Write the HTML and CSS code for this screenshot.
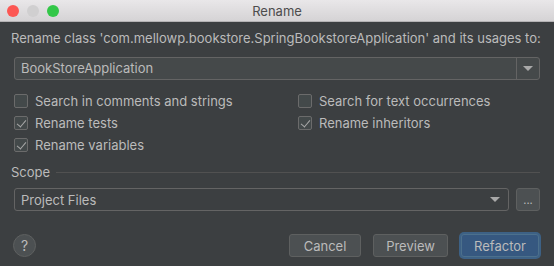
FILE: index.html
```html
<!DOCTYPE html>
<html lang="en">
<head>
  <title>Rename</title>
  <link rel="stylesheet" href="styles.css">
</head>
<body>
  <div class="dialog">
    <div class="titlebar">
      <div class="lights">
        <span class="light red"></span>
        <span class="light gray"></span>
        <span class="light green"></span>
      </div>
      <div class="title">Rename</div>
    </div>

    <div class="content">
      <div class="prompt">Rename class 'com.mellowp.bookstore.SpringBookstoreApplication' and its usages to:</div>

      <div class="combo">
        <div class="combo-text">BookStoreApplication</div>
        <div class="combo-arrow"><span class="arrow"></span></div>
      </div>

      <div class="options">
        <label class="check"><span class="box"></span>Search in comments and strings</label>
        <label class="check"><span class="box"></span>Search for text occurrences</label>
        <label class="check"><span class="box checked"></span>Rename tests</label>
        <label class="check"><span class="box checked"></span>Rename inheritors</label>
        <label class="check"><span class="box checked"></span>Rename variables</label>
      </div>

      <div class="scope-title">
        <span>Scope</span>
        <span class="rule"></span>
      </div>

      <div class="scope-row">
        <div class="select">
          <span>Project Files</span>
          <span class="arrow"></span>
        </div>
        <button class="dots">...</button>
      </div>

      <div class="footer">
        <button class="help">?</button>
        <div class="actions">
          <button class="btn cancel">Cancel</button>
          <button class="btn preview">Preview</button>
          <button class="btn primary">Refactor</button>
        </div>
      </div>
    </div>
  </div>
</body>
</html>
```

FILE: styles.css
```css
body {
  margin: 0;
  font-family: Inter, "Noto Sans", sans-serif;
  font-size: 13px;
  background: #3c3f41;
}

* {
  box-sizing: border-box;
}

.dialog {
  width: 554px;
  height: 266px;
  background: #3c3f41;
  color: #bbbbbb;
  overflow: hidden;
}

/* Barre de titre */
.titlebar {
  height: 22px;
  background: linear-gradient(to bottom, #e9e7e9, #d5d3d5);
  border-bottom: 1px solid #b4b2b4;
  display: flex;
  align-items: center;
  position: relative;
}

.lights {
  display: flex;
  gap: 8px;
  padding-left: 7px;
}

.light {
  width: 12px;
  height: 12px;
  border-radius: 50%;
}

.light.red { background: #fc5753; }
.light.gray { background: #d0cfd0; }
.light.green { background: #33c748; }

.title {
  position: absolute;
  left: 0;
  right: 0;
  text-align: center;
  color: #4d4d4d;
  font-size: 13px;
}

.content {
  padding: 7px 14px 0 11px;
}

.prompt {
  height: 18px;
  line-height: 18px;
  white-space: nowrap;
}

.combo {
  margin: 10px 0 0 3px;
  height: 23px;
  border: 1px solid #646464;
  border-radius: 3px;
  background: #45494a;
  display: flex;
}

.combo-text {
  flex: 1;
  padding-left: 6px;
  line-height: 21px;
}

.combo-arrow {
  width: 23px;
  border-left: 1px solid #646464;
  display: flex;
  align-items: center;
  justify-content: center;
}

.arrow {
  width: 0;
  height: 0;
  border-left: 5px solid transparent;
  border-right: 5px solid transparent;
  border-top: 5px solid #a9a9a9;
}

/* Cases a cocher */
.options {
  margin: 10px 0 0 3px;
  display: grid;
  grid-template-columns: 284px 1fr;
  grid-auto-rows: 22px;
}

.check {
  display: flex;
  align-items: center;
  gap: 7px;
}

.box {
  width: 14px;
  height: 14px;
  border: 1px solid #6b6b6b;
  border-radius: 2px;
  background: #43494a;
  position: relative;
}

.box.checked::after {
  content: "";
  position: absolute;
  left: 4px;
  top: 1px;
  width: 4px;
  height: 8px;
  border-right: 1.5px solid #a9a9a9;
  border-bottom: 1.5px solid #a9a9a9;
  transform: rotate(40deg);
}

.scope-title {
  margin-top: 8px;
  display: flex;
  align-items: center;
  gap: 6px;
  height: 16px;
}

.rule {
  flex: 1;
  height: 1px;
  background: #515151;
}

.scope-row {
  margin: 8px 0 0 3px;
  display: flex;
  gap: 7px;
}

.select {
  flex: 1;
  height: 23px;
  border: 1px solid #646464;
  border-radius: 3px;
  display: flex;
  align-items: center;
  justify-content: space-between;
  padding: 0 8px 0 6px;
}

.dots {
  width: 24px;
  height: 23px;
  background: #4c5052;
  border: 1px solid #5e6060;
  border-radius: 3px;
  color: #bbbbbb;
  font-family: inherit;
  font-size: 11px;
  padding: 0;
}

.footer {
  margin: 23px 0 0 2px;
  display: flex;
  align-items: center;
  justify-content: space-between;
}

.help {
  width: 23px;
  height: 23px;
  border-radius: 50%;
  background: #4c5052;
  border: 1px solid #5e6060;
  color: #bbbbbb;
  font-family: inherit;
  font-size: 14px;
  padding: 0;
}

.actions {
  display: flex;
  gap: 12px;
  padding-right: 1px;
}

.btn {
  height: 23px;
  padding: 0;
  background: #4c5052;
  border: 1px solid #5e6060;
  border-radius: 3px;
  color: #bbbbbb;
  font-family: inherit;
  font-size: 13px;
}

.btn.cancel { width: 72px; }
.btn.preview { width: 75px; }

.btn.primary {
  width: 78px;
  margin-left: 1px;
  background: #365880;
  border-color: #4c708c;
  box-shadow: 0 0 0 2px #3d6185;
  color: #bbbbbb;
}
```
